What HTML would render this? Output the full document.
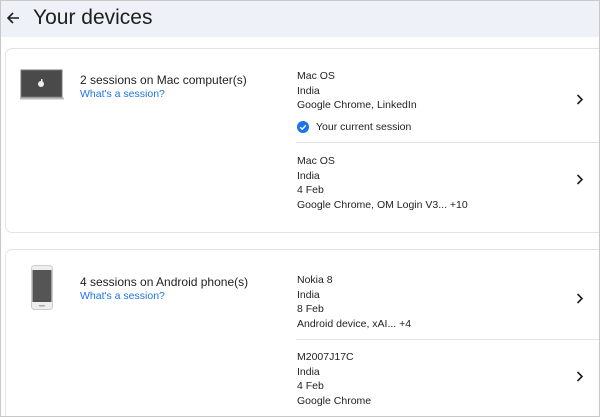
<!DOCTYPE html><html style="overflow:hidden;width:600px;height:417px"><head><style>
body{margin:0;width:600px;height:417px;overflow:hidden;background:#fff;font-family:"Liberation Sans",Arial,sans-serif;color:#202124;position:relative}
.frame{position:absolute;left:0;top:0;width:598px;height:415px;border:1px solid #c8c8c8;pointer-events:none;z-index:5}
.hdr{position:absolute;left:0;top:0;width:600px;height:37px;background:#eef1f7}
.hdr .t{position:absolute;left:33px;top:6px;font-size:21px;color:#1f1f1f}
.card{position:absolute;left:5px;width:600px;border:1px solid #e3e3e3;border-radius:7px;background:#fff}
.t1{position:absolute;font-size:12px;color:#1f1f1f}
.lk{position:absolute;font-size:10.5px;color:#1a73e8}
.s{position:absolute;font-size:10.5px;line-height:14.5px;color:#1f1f1f}
.div{position:absolute;left:296px;width:304px;height:1px;background:#e3e3e3}
</style></head><body>
<div class="hdr"><svg style="position:absolute;left:6px;top:11px" width="14" height="14" viewBox="0 0 14 14"><path d="M13 7H2M7 2L2 7l5 5" stroke="#1f1f1f" stroke-width="1.6" fill="none"/></svg><div class="t">Your devices</div></div>
<div class="card" style="top:48px;height:183px"></div>
<div class="card" style="top:249px;height:180px"></div>
<svg style="position:absolute;left:20px;top:69px" width="44" height="32" viewBox="0 0 44 32"><rect x="1" y="1" width="41" height="27" fill="#4a4a4a" stroke="#777"/><rect x="0" y="28.5" width="44" height="2" fill="#bbb"/><circle cx="21" cy="15" r="3" fill="#eee"/><rect x="21" y="10" width="1.5" height="2.5" fill="#eee"/></svg>
<div class="t1" style="left:80px;top:73px">2 sessions on Mac computer(s)</div>
<div class="lk" style="left:80px;top:88px">What's a session?</div>
<div class="s" style="left:297px;top:69px">Mac OS<br>India<br>Google Chrome, LinkedIn</div>
<svg style="position:absolute;left:297px;top:121px" width="12" height="12" viewBox="0 0 12 12"><circle cx="6" cy="6" r="6" fill="#1a73e8"/><path d="M3.2 6.2l2 2 3.6-3.8" stroke="#fff" stroke-width="1.4" fill="none"/></svg>
<div class="s" style="left:316px;top:120px">Your current session</div>
<div class="div" style="top:142px"></div>
<div class="s" style="left:297px;top:154px">Mac OS<br>India<br>4 Feb<br>Google Chrome, OM Login V3... +10</div>
<svg style="position:absolute;left:576px;top:94px" width="8" height="11" viewBox="0 0 8 11"><path d="M1.5 1l4.5 4.5L1.5 10" stroke="#1f1f1f" stroke-width="1.6" fill="none"/></svg>
<svg style="position:absolute;left:576px;top:174px" width="8" height="11" viewBox="0 0 8 11"><path d="M1.5 1l4.5 4.5L1.5 10" stroke="#1f1f1f" stroke-width="1.6" fill="none"/></svg>
<svg style="position:absolute;left:31px;top:265px" width="22" height="45" viewBox="0 0 22 45"><rect x="0.5" y="0.5" width="21" height="44" rx="3" fill="#eee" stroke="#ccc"/><rect x="1.5" y="5" width="19" height="32" fill="#555"/><rect x="8" y="40" width="6" height="1.5" fill="#aaa"/></svg>
<div class="t1" style="left:80px;top:275px">4 sessions on Android phone(s)</div>
<div class="lk" style="left:80px;top:290px">What's a session?</div>
<div class="s" style="left:297px;top:273px">Nokia 8<br>India<br>8 Feb<br>Android device, xAI... +4</div>
<div class="div" style="top:339px"></div>
<div class="s" style="left:297px;top:350px">M2007J17C<br>India<br>4 Feb<br>Google Chrome</div>
<svg style="position:absolute;left:576px;top:293px" width="8" height="11" viewBox="0 0 8 11"><path d="M1.5 1l4.5 4.5L1.5 10" stroke="#1f1f1f" stroke-width="1.6" fill="none"/></svg>
<svg style="position:absolute;left:576px;top:371px" width="8" height="11" viewBox="0 0 8 11"><path d="M1.5 1l4.5 4.5L1.5 10" stroke="#1f1f1f" stroke-width="1.6" fill="none"/></svg>
<div class="frame"></div>
</body></html>
